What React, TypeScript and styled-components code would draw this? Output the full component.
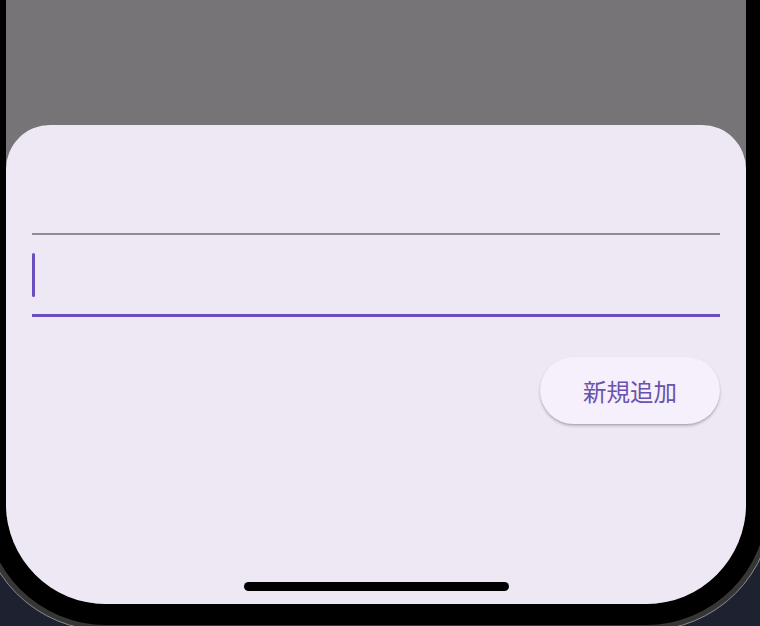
import React from "react";
import styled, { createGlobalStyle } from "styled-components";

const Global = createGlobalStyle`
  html, body { margin: 0; padding: 0; background: #1e2130; }
  body { font-family: "Noto Sans CJK JP", "Noto Sans", sans-serif; }
`;

const Page = styled.div`
  width: 760px;
  height: 626px;
  overflow: hidden;
  background: #1e2130;
`;

const DeviceRing = styled.div`
  width: 782px;
  margin: -227px 0 0 -21px;
  padding: 5px;
  border: 1px solid #8c8c8c;
  border-radius: 127px;
  background: #363636;
`;

const Bezel = styled.div`
  padding: 21px;
  border-radius: 121px;
  background: #000;
`;

const Screen = styled.div`
  height: 804px;
  border-radius: 100px;
  overflow: hidden;
  background: #767476;
  display: flex;
  flex-direction: column;
`;

const Scrim = styled.div`
  height: 325px;
  flex: none;
`;

const Sheet = styled.div`
  flex: 1;
  background: #eee8f5;
  border-radius: 44px 44px 0 0;
  padding: 108px 26px 13px;
  display: flex;
  flex-direction: column;
`;

const Divider = styled.div`
  height: 2px;
  background: #8f8b94;
`;

const Field = styled.div`
  box-sizing: border-box;
  height: 82px;
  padding-top: 18px;
  border-bottom: 3px solid #6a4ebe;
  display: flex;
  align-items: flex-start;
`;

const Cursor = styled.div`
  width: 3px;
  height: 44px;
  border-radius: 2px;
  background: #6a4ebe;
`;

const Actions = styled.div`
  display: flex;
  justify-content: flex-end;
  margin-top: 40px;
`;

const PillButton = styled.button`
  width: 180px;
  height: 67px;
  border: none;
  border-radius: 34px;
  background: #f5f0fb;
  color: #6a52ae;
  font-family: "Noto Sans CJK JP", "Noto Sans", sans-serif;
  font-size: 23.5px;
  font-weight: 400;
  box-shadow: 0 2px 3px rgba(0, 0, 0, 0.22), 0 1px 1px rgba(0, 0, 0, 0.08);
  cursor: pointer;
  padding: 0;
`;

const HomeIndicator = styled.div`
  margin: auto auto 0;
  width: 265px;
  height: 9px;
  border-radius: 5px;
  background: #000;
`;

export default function App() {
  return (
    <Page>
      <Global />
      <DeviceRing>
        <Bezel>
          <Screen>
            <Scrim />
            <Sheet>
              <Divider />
              <Field>
                <Cursor />
              </Field>
              <Actions>
                <PillButton>新規追加</PillButton>
              </Actions>
              <HomeIndicator />
            </Sheet>
          </Screen>
        </Bezel>
      </DeviceRing>
    </Page>
  );
}
